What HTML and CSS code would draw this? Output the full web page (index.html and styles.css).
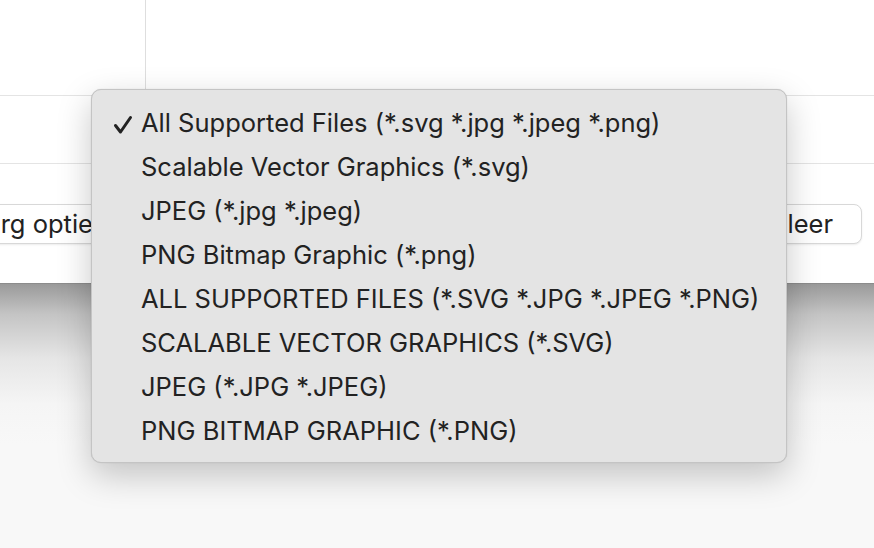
FILE: index.html
```html
<!DOCTYPE html>
<html lang="nl">

<head>
    <meta charset="UTF-8">
    <meta name="viewport" content="width=device-width, initial-scale=1.0">
    <title>Open bestand</title>
    <link rel="stylesheet" href="styles.css">
</head>

<body>
    <div class="window">
        <div class="browser">
            <div class="sidebar"></div>
            <div class="files"></div>
        </div>
        <div class="options"></div>
        <div class="actions">
            <button class="btn btn-left">Verberg opties</button>
            <button class="btn btn-right">Annuleer</button>
        </div>
    </div>
    <div class="backdrop"></div>

    <ul class="menu">
        <li class="menu-item checked">
            <svg class="check" width="20" height="20" viewBox="0 0 20 20">
                <path d="M2.5 10.5 L7.5 17 L17.5 2.5" fill="none" stroke="#222" stroke-width="3" stroke-linecap="round" stroke-linejoin="round" />
            </svg>
            All Supported Files (*.svg *.jpg *.jpeg *.png)
        </li>
        <li class="menu-item">Scalable Vector Graphics (*.svg)</li>
        <li class="menu-item">JPEG (*.jpg *.jpeg)</li>
        <li class="menu-item">PNG Bitmap Graphic (*.png)</li>
        <li class="menu-item">ALL SUPPORTED FILES (*.SVG *.JPG *.JPEG *.PNG)</li>
        <li class="menu-item">SCALABLE VECTOR GRAPHICS (*.SVG)</li>
        <li class="menu-item">JPEG (*.JPG *.JPEG)</li>
        <li class="menu-item">PNG BITMAP GRAPHIC (*.PNG)</li>
    </ul>
</body>

</html>
```

FILE: styles.css
```css
body {
    margin: 0;
    background-color: #f8f8f8;
    font-family: "Inter", "Noto Sans", sans-serif;
    color: #222;
    overflow: hidden;
}

.window {
    background-color: #fff;
    height: 283px;
    border-bottom: 1px solid #8c8c8c;
    display: flex;
    flex-direction: column;
}

.browser {
    display: flex;
    height: 95px;
    border-bottom: 1px solid #e4e4e4;
}

.sidebar {
    width: 145px;
    border-right: 1px solid #dedede;
}

.options {
    height: 67px;
    border-bottom: 1px solid #e4e4e4;
}

.actions {
    display: flex;
    justify-content: space-between;
    padding: 40px 12px 0 0;
}

.btn {
    height: 40px;
    padding: 0 15px 2px;
    background: #fff;
    border: 1px solid #d8d8d8;
    border-radius: 8px;
    box-shadow: 0 1px 2px rgba(0, 0, 0, 0.08);
    font-family: inherit;
    font-size: 25.5px;
    color: #222;
    white-space: nowrap;
}

.btn-left {
    margin-left: -87px;
}

.btn-right {
    padding: 0 28px 2px;
}

.backdrop {
    height: 264px;
    background: linear-gradient(#9a9a9a 0, #c4c4c4 30px, #e6e6e6 75px, #f5f5f5 120px, #f8f8f8 160px);
}

.menu {
    position: absolute;
    left: 91px;
    top: 89px;
    width: 694px;
    margin: 0;
    padding: 12px 0 8px;
    list-style: none;
    background: #e4e4e4;
    border: 1px solid #c4c4c4;
    border-radius: 10px;
    box-shadow: 0 12px 34px rgba(0, 0, 0, 0.22), 0 0 1px rgba(0, 0, 0, 0.2);
}

.menu-item {
    position: relative;
    height: 44px;
    line-height: 42px;
    padding-left: 49px;
    font-size: 25.5px;
    white-space: nowrap;
}

.check {
    position: absolute;
    left: 21px;
    top: 13px;
}
```
